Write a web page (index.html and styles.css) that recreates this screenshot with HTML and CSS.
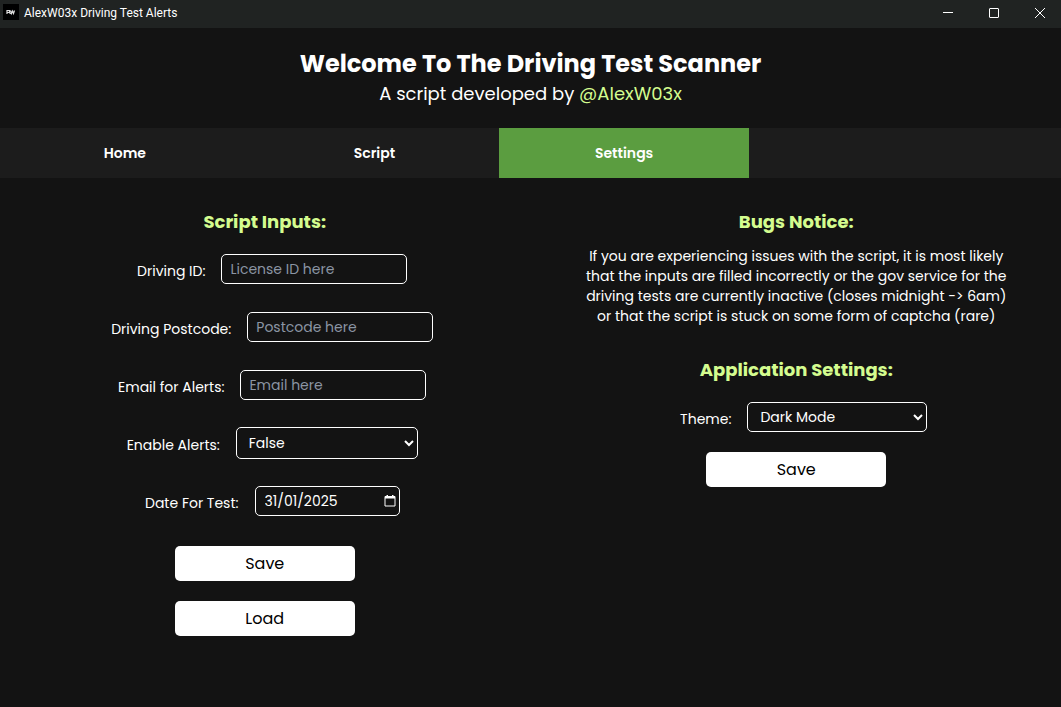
FILE: index.html
```html
<!DOCTYPE html>
<html lang="en-GB">
<head>
<meta charset="utf-8">
<meta name="viewport" content="width=device-width, initial-scale=1">
<title>AlexW03x Driving Test Alerts</title>
<link rel="stylesheet" href="styles.css">
</head>
<body>
<div class="titlebar">
  <svg class="app-icon" viewBox="0 0 16 16" aria-hidden="true"><rect width="16" height="16" fill="#000"/><path d="M4 10V6.500H6.500V8.500H4.500M6.500 8.500L7.500 10M7.500 6.500L8.500 9.500L9.500 7L10.500 9.500L11.500 6.500" fill="none" stroke="#ddd" stroke-width="1.200"/></svg>
  <span class="titlebar-text">AlexW03x Driving Test Alerts</span>
  <div class="window-controls">
    <button class="window-btn" aria-label="Minimise"><svg viewBox="0 0 12 12"><path d="M1 5.500H11"/></svg></button>
    <button class="window-btn" aria-label="Maximise"><svg viewBox="0 0 12 12"><rect x="1.500" y="1.500" width="9" height="9" rx="0.500"/></svg></button>
    <button class="window-btn" aria-label="Close"><svg viewBox="0 0 12 12"><path d="M1 1L11 11M11 1L1 11"/></svg></button>
  </div>
</div>
<header class="header">
  <h1 class="title">Welcome To The Driving Test Scanner</h1>
  <p class="subtitle">A script developed by <a class="author" href="#author">@AlexW03x</a></p>
</header>
<nav class="nav">
  <a class="nav-item" href="#home">Home</a>
  <a class="nav-item" href="#script">Script</a>
  <a class="nav-item nav-item-active" href="#settings" aria-current="page">Settings</a>
</nav>
<main class="columns">
  <form class="column">
    <h2 class="heading">Script Inputs:</h2>
    <div class="fields">
      <div class="field"><label class="label" for="licence">Driving ID:</label><input class="control" id="licence" type="text" placeholder="License ID here"></div>
      <div class="field"><label class="label" for="postcode">Driving Postcode:</label><input class="control" id="postcode" type="text" placeholder="Postcode here"></div>
      <div class="field"><label class="label" for="email">Email for Alerts:</label><input class="control" id="email" type="email" placeholder="Email here"></div>
      <div class="field"><label class="label" for="alerts">Enable Alerts:</label><select class="control select select-tall" id="alerts"><option>False</option><option>True</option></select></div>
      <div class="field"><label class="label" for="date">Date For Test:</label><div class="control date"><input class="date-input" id="date" type="text" value="31/01/2025"><button class="date-btn" type="button" aria-label="Choose date"><svg viewBox="0 0 12 13"><path d="M1 2.500H11V12H1Z" fill="none" stroke="#fff"/><path d="M1 2H11V4.500H1ZM2.500 1H4V3H2.500ZM8 1H9.500V3H8Z" fill="#fff"/></svg></button></div></div>
    </div>
    <div class="actions">
      <button class="button" type="button">Save</button>
      <button class="button" type="button">Load</button>
    </div>
  </form>
  <form class="column">
    <h2 class="heading">Bugs Notice:</h2>
    <p class="notice">If you are experiencing issues with the script, it is most likely<br>that the inputs are filled incorrectly or the gov service for the<br>driving tests are currently inactive (closes midnight -&gt; 6am)<br>or that the script is stuck on some form of captcha (rare)</p>
    <h2 class="heading">Application Settings:</h2>
    <div class="field"><label class="label" for="theme">Theme:</label><select class="control select" id="theme"><option>Dark Mode</option><option>Light Mode</option></select></div>
    <div class="actions actions-close">
      <button class="button" type="button">Save</button>
    </div>
  </form>
</main>
</body>
</html>
```
FILE: styles.css
```css
* { box-sizing: border-box; }
body {
  margin: 0;
  min-height: 100vh;
  background: #131313;
  color: #fff;
  font: 14px/20px Poppins, Inter, sans-serif;
}
h1, h2, p { margin: 0; }
button, input, select { font: inherit; color: inherit; }

.titlebar {
  display: flex;
  align-items: center;
  height: 28px;
  padding-left: 3px;
  gap: 5px;
  background: #202322;
  font: 12px/16px "Segoe UI", Roboto, sans-serif;
}
.app-icon { width: 16px; height: 16px; margin-bottom: 4px; }
.titlebar-text { margin-bottom: 2px; }
.window-controls { display: flex; margin-left: auto; }
.window-btn {
  display: grid;
  place-items: center;
  width: 46px;
  height: 28px;
  padding: 0 0 2px 4px;
  border: 0;
  background: none;
}
.window-btn svg { width: 12px; height: 12px; fill: none; stroke: #fff; }

.header { padding: 20px 0; text-align: center; }
.title { font-size: 24px; line-height: 32px; font-weight: 700; }
.subtitle { font-size: 18px; line-height: 28px; }
.author { color: #d4fc8f; text-decoration: none; }

.nav {
  display: grid;
  grid-template-columns: 4fr 4fr 4fr 5fr;
  background: #1c1c1c;
}
.nav-item {
  color: #fff;
  font-weight: 600;
  line-height: 50px;
  text-align: center;
  text-decoration: none;
}
.nav-item-active { background: #5b9d40; }

.columns {
  display: grid;
  grid-template-columns: 1fr 1fr;
  column-gap: 2px;
  padding-top: 28px;
}
.column { text-align: center; }
.heading {
  margin-bottom: 15px;
  color: #d4fc8f;
  font-size: 18px;
  line-height: 32px;
  font-weight: 700;
}
.fields { display: grid; gap: 26px; }
.field {
  display: flex;
  align-items: center;
  justify-content: center;
  height: 32px;
}
.label { margin: 4px 16px 0 15px; }
.control {
  width: 186px;
  height: 30px;
  padding: 0 8px;
  border: 1px solid #fff;
  border-radius: 5px;
  background: #131313;
}
.control::placeholder { color: #8b95a3; opacity: 1; }
.select { width: 180px; padding: 0 0 0 8px; }
.select-tall { width: 182px; height: 32px; }
.date { display: flex; align-items: center; width: 145px; padding: 0 3px 0 9px; }
.date-input { min-width: 0; flex: 1; padding: 0; border: 0; background: none; }
.date-btn { display: flex; padding: 0 0 2px; border: 0; background: none; }
.date-btn svg { width: 12px; height: 13px; }

.actions { display: grid; justify-content: center; gap: 20px; margin-top: 29px; }
.actions-close { margin-top: 19px; }
.button {
  width: 180px;
  height: 35px;
  border: 0;
  border-radius: 5px;
  background: #fff;
  color: #000;
  font-size: 16px;
}
.notice { margin: -7px 0 28px; }
```
